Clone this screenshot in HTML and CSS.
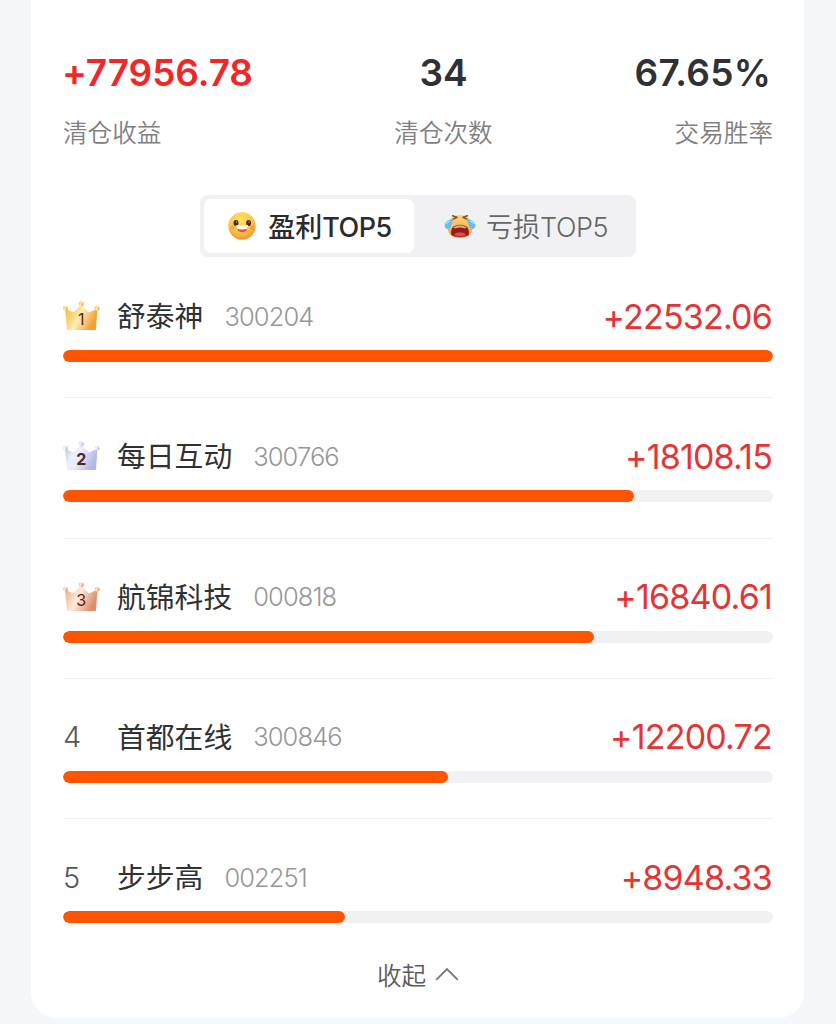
FILE: index.html
```
<!DOCTYPE html>
<html lang="zh-CN">
<head>
  <meta charset="UTF-8" />
  <meta name="viewport" content="width=device-width, initial-scale=1.0" />
  <title>清仓收益</title>
  <link rel="stylesheet" href="styles.css">
</head>
<body>
  <!-- Shared gradients and the crown outline -->
  <svg class="defs" width="0" height="0">
    <defs>
      <linearGradient id="gold" x1="0" y1="0" x2="1" y2="0.4">
        <stop offset="0" stop-color="#f6b544" /><stop offset="0.3" stop-color="#fbcf70" /><stop offset="0.55" stop-color="#ffedb8" /><stop offset="1" stop-color="#f3a033" />
      </linearGradient>
      <linearGradient id="silver" x1="0" y1="0" x2="1" y2="0.4">
        <stop offset="0" stop-color="#b6c2e6" /><stop offset="0.35" stop-color="#edf0fc" /><stop offset="0.55" stop-color="#e9ebfb" /><stop offset="1" stop-color="#b3b8e6" />
      </linearGradient>
      <linearGradient id="bronze" x1="0" y1="0" x2="1" y2="0.4">
        <stop offset="0" stop-color="#ee9f7a" /><stop offset="0.3" stop-color="#f8cdb4" /><stop offset="0.5" stop-color="#ffebdd" /><stop offset="1" stop-color="#e08e6a" />
      </linearGradient>
      <radialGradient id="face" cx="0.45" cy="0.3" r="0.75">
        <stop offset="0" stop-color="#ffe45c" /><stop offset="0.55" stop-color="#ffc83f" /><stop offset="1" stop-color="#f28a3c" />
      </radialGradient>
      <linearGradient id="cryFace" x1="0" y1="0" x2="0" y2="1">
        <stop offset="0" stop-color="#ffd873" /><stop offset="1" stop-color="#f39a45" />
      </linearGradient>
      <symbol id="crown" viewBox="0 0 38 30">
        <path d="M2 7.5 10.5 11.6 18.2 3.5 26 11.6 34.5 7.5 33 28.2Q32.9 29 32.1 29H4.9Q4.1 29 4 28.2Z" />
        <circle cx="2.4" cy="7.2" r="2.4" />
        <circle cx="18.2" cy="2.8" r="2.5" />
        <circle cx="34.2" cy="7.2" r="2.4" />
      </symbol>
    </defs>
  </svg>

  <div class="card">
    <div class="summary">
      <div class="stat">
        <div class="stat-value up">+77956.78</div>
        <div class="stat-label">清仓收益</div>
      </div>
      <div class="stat center">
        <div class="stat-value">34</div>
        <div class="stat-label">清仓次数</div>
      </div>
      <div class="stat right">
        <div class="stat-value">67.65%</div>
        <div class="stat-label">交易胜率</div>
      </div>
    </div>

    <div class="tabs">
      <div class="tab active">
        <svg class="emoji" viewBox="0 0 32 28">
          <circle cx="16" cy="14" r="13.7" fill="url(#face)" />
          <ellipse cx="10" cy="11" rx="2.5" ry="3" fill="#4a2523" />
          <ellipse cx="22.6" cy="11" rx="2.5" ry="3" fill="#4a2523" />
          <circle cx="10.6" cy="10" r="0.6" fill="#fff" />
          <circle cx="23.2" cy="10" r="0.6" fill="#fff" />
          <circle cx="6.5" cy="15.5" r="2.3" fill="#fa9a43" opacity="0.7" />
          <circle cx="26" cy="15.5" r="2.3" fill="#fa8a43" opacity="0.7" />
          <path d="M10.3 13.5Q16 14.7 22 13.5 21.5 20.3 16.2 20.3 11 20.3 10.3 13.5Z" fill="#ee4d3d" />
          <path d="M10.3 13Q16 14.5 22 13L21.3 16.8Q16 18 11 16.8Z" fill="#fff" />
        </svg>
        <span>盈利<span class="latin">TOP5</span></span>
      </div>
      <div class="tab">
        <svg class="emoji" viewBox="0 0 32 28">
          <path d="M16 3C24 3 28.6 8 28.6 15 28.6 22 24 26 16 26S3.7 22 3.7 15C3.7 8 8 3 16 3Z" fill="url(#cryFace)" />
          <path d="M8.5 3.7 13 5.3 9 7.2M23.5 3.7 19 5.3 23 7.2" fill="none" stroke="#8b5125" stroke-width="1.5" stroke-linecap="round" stroke-linejoin="round" />
          <path d="M10 7.3C5 7 1 9.5 .7 13 .3 17.3 5 18.5 6.7 14.5 7.7 11.5 8.5 9 10 7.3Z" fill="#65bdf2" />
          <path d="M22 7.3C27 7 31 9.5 31.3 13 31.7 17.3 27 18.5 25.3 14.5 24.3 11.5 23.5 9 22 7.3Z" fill="#65bdf2" />
          <path d="M2 12Q3 9.5 6 9M30 12Q29 9.5 26 9" fill="none" stroke="#b8e5fc" stroke-width="1.2" />
          <path d="M7.3 23C6 16 10 12.7 16 12.7S26 16 24.7 23C22 25.6 10 25.6 7.3 23Z" fill="#921d1d" />
          <path d="M9.5 15.4Q16 11 22.5 15.4L21 16.4Q16 14.8 11 16.4Z" fill="#e9a596" />
          <path d="M10 23Q11 20 16 20.5 21 20 22 23 16 25.3 10 23Z" fill="#e84d46" />
        </svg>
        <span>亏损<span class="latin">TOP5</span></span>
      </div>
    </div>

    <div class="list">
      <div class="item">
        <div class="row">
          <div class="rank">
            <svg class="crown" viewBox="0 0 38 30"><use href="#crown" fill="url(#gold)" /><text x="18.2" y="24.3">1</text></svg>
          </div>
          <span class="name">舒泰神</span>
          <span class="code">300204</span>
          <span class="amount">+22532.06</span>
        </div>
        <div class="bar"><div class="fill" style="width: 100%"></div></div>
      </div>
      <div class="item">
        <div class="row">
          <div class="rank">
            <svg class="crown" viewBox="0 0 38 30"><use href="#crown" fill="url(#silver)" /><text class="bold" x="18.2" y="24.3">2</text></svg>
          </div>
          <span class="name">每日互动</span>
          <span class="code">300766</span>
          <span class="amount">+18108.15</span>
        </div>
        <div class="bar"><div class="fill" style="width: 80.4%"></div></div>
      </div>
      <div class="item">
        <div class="row">
          <div class="rank">
            <svg class="crown" viewBox="0 0 38 30"><use href="#crown" fill="url(#bronze)" /><text x="18.2" y="24.3">3</text></svg>
          </div>
          <span class="name">航锦科技</span>
          <span class="code">000818</span>
          <span class="amount">+16840.61</span>
        </div>
        <div class="bar"><div class="fill" style="width: 74.75%"></div></div>
      </div>
      <div class="item">
        <div class="row">
          <div class="rank">4</div>
          <span class="name">首都在线</span>
          <span class="code">300846</span>
          <span class="amount">+12200.72</span>
        </div>
        <div class="bar"><div class="fill" style="width: 54.2%"></div></div>
      </div>
      <div class="item">
        <div class="row">
          <div class="rank">5</div>
          <span class="name">步步高</span>
          <span class="code">002251</span>
          <span class="amount">+8948.33</span>
        </div>
        <div class="bar"><div class="fill" style="width: 39.7%"></div></div>
      </div>
    </div>

    <div class="collapse">
      <span>收起</span>
      <svg class="arrow" viewBox="0 0 24 14"><path d="M1.2 12.8 12 2 22.8 12.8" /></svg>
    </div>
  </div>
</body>
</html>
```
FILE: styles.css
```
* {
  box-sizing: border-box;
  margin: 0;
  padding: 0;
}
body {
  font-family: Inter, "Noto Sans CJK SC", sans-serif;
  font-feature-settings: "calt" 0;
  background: #f4f8fa;
  height: 1024px;
  overflow: hidden;
  color: #303133;
}
.defs {
  display: block;
}
.card {
  width: 773px;
  height: 1018px;
  margin-left: 31px;
  padding: 50px 31px 0 32px;
  background: #fff;
  border-radius: 0 0 26px 26px;
}

/* Summary */
.summary {
  display: grid;
  grid-template-columns: 1fr auto 1fr;
  height: 145px;
}
.stat-value {
  height: 46px;
  line-height: 46px;
  font-size: 37px;
  font-weight: 600;
  letter-spacing: -0.1px;
}
.stat-label {
  margin-top: 18px;
  font-size: 24.6px;
  line-height: 38px;
  font-weight: 350;
  color: #808080;
}
.center {
  text-align: center;
  padding-left: 51px;
}
.right {
  text-align: right;
}
.right .stat-value {
  padding-right: 2px;
  letter-spacing: 0.2px;
}
.up {
  margin-left: -1px;
  color: #f12626;
}

/* Tabs */
.tabs {
  display: flex;
  width: 436px;
  height: 62px;
  margin-left: 137px;
  padding: 4px;
  background: #f1f1f4;
  border-radius: 8px;
}
.tab {
  display: flex;
  align-items: center;
  justify-content: center;
  gap: 10px;
  width: 210px;
  height: 54px;
  font-size: 27px;
  line-height: 50px;
  color: #666;
  border-radius: 7px;
  font-weight: 350;
}
.tab + .tab {
  width: 218px;
  padding-left: 6px;
}
.tab > span {
  margin-top: 3px;
}
.active {
  background: #fff;
  color: #2b2b2d;
  font-weight: 500;
}
.latin {
  letter-spacing: -0.5px;
}
.emoji {
  width: 32px;
  height: 28px;
}

/* Ranking list */
.list {
  padding-top: 1px;
}
.item {
  height: 140.25px;
  padding-top: 34px;
  border-bottom: 1px solid #efeff0;
}
.item:last-child {
  border-bottom: none;
}
.row {
  display: flex;
  align-items: center;
  height: 48px;
}
.rank {
  width: 54px;
  font-size: 29px;
  font-weight: 300;
  color: #555;
}
.crown {
  display: block;
  width: 38px;
  height: 30px;
}
.crown text {
  font-size: 16px;
  font-weight: 400;
  text-anchor: middle;
  fill: #542819;
}
.crown .bold {
  font-weight: 700;
}
.name {
  padding-top: 2px;
  font-size: 28.8px;
  line-height: 46px;
}
.code {
  margin-left: 21px;
  font-size: 25.5px;
  font-weight: 350;
  letter-spacing: -0.9px;
  color: #979797;
}
.amount {
  margin-left: auto;
  padding-right: 1px;
  font-size: 34px;
  font-weight: 400;
  letter-spacing: -0.8px;
  color: #e43535;
}
.bar {
  height: 12px;
  margin-top: 10px;
  background: #f1f1f4;
  border-radius: 6px;
  overflow: hidden;
}
.fill {
  height: 100%;
  background: #ff5500;
  border-radius: 6px;
}

/* Footer toggle */
.collapse {
  display: flex;
  align-items: center;
  justify-content: center;
  gap: 9px;
  margin-top: -1px;
  font-size: 24.6px;
  line-height: 36px;
  font-weight: 350;
  color: #5c5c5c;
}
.arrow {
  width: 24px;
  height: 14px;
  margin-top: -4px;
  fill: none;
  stroke: #777;
  stroke-width: 1.8;
}
```
